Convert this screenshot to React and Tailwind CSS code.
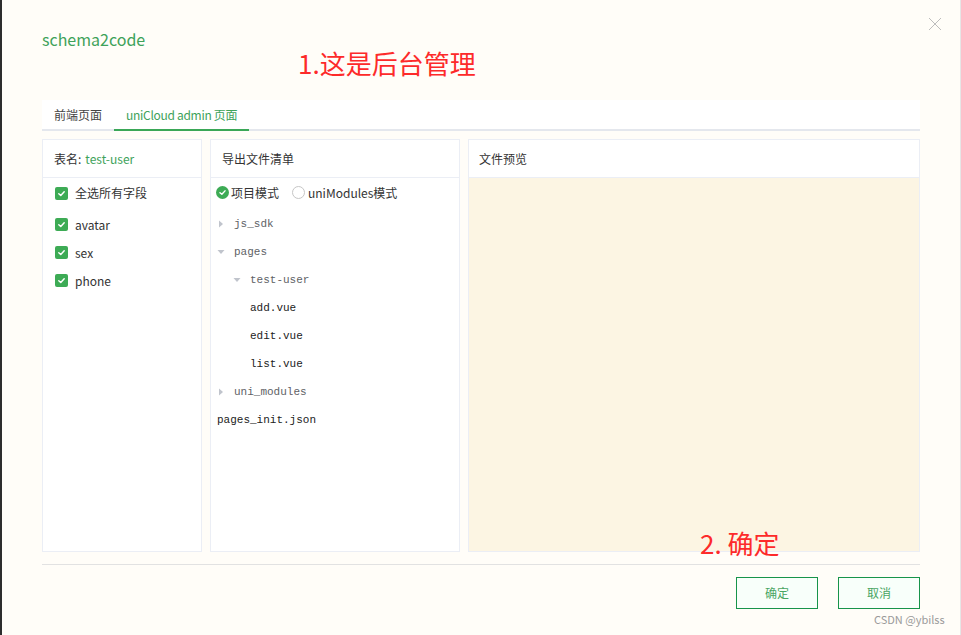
import React from "react";

const sans = "font-['Microsoft_YaHei','Noto_Sans_CJK_SC',sans-serif]";
const mono = "font-['Liberation_Mono','DejaVu_Sans_Mono',monospace]";

function CheckBox() {
  return (
    <span className="inline-flex h-[13px] w-[13px] items-center justify-center rounded-[2px] bg-[#3dab55]">
      <svg viewBox="0 0 10 10" className="h-[9px] w-[9px]">
        <path d="M2 5.2 L4.2 7.2 L8 3" fill="none" stroke="#fff" strokeWidth="1.6" strokeLinecap="round" strokeLinejoin="round" />
      </svg>
    </span>
  );
}

function Caret({ open }) {
  return (
    <svg viewBox="0 0 8 8" className="h-[8px] w-[8px]">
      {open ? <path d="M0.5 2 L7.5 2 L4 6 Z" fill="#c0c4cc" /> : <path d="M2 0.5 L6 4 L2 7.5 Z" fill="#c0c4cc" />}
    </svg>
  );
}

const fields = ["avatar", "sex", "phone"];

const tree = [
  { label: "js_sdk", indent: 0, caret: "closed", muted: true },
  { label: "pages", indent: 0, caret: "open", muted: true },
  { label: "test-user", indent: 1, caret: "open", muted: true },
  { label: "add.vue", indent: 2 },
  { label: "edit.vue", indent: 2 },
  { label: "list.vue", indent: 2 },
  { label: "uni_modules", indent: 0, caret: "closed", muted: true },
  { label: "pages_init.json", indent: -1 },
];

export default function App() {
  return (
    <div className={`relative h-[635px] w-[961px] overflow-hidden border-l-2 border-r border-l-[#2d2d2d] border-r-[#e6e6e6] bg-[#fffdf8] ${sans}`}>
      {/* close */}
      <svg viewBox="0 0 14 14" className="absolute left-[926px] top-[17px] h-[14px] w-[14px]">
        <path d="M1 1 L13 13 M13 1 L1 13" stroke="#bdbdbd" strokeWidth="1" />
      </svg>

      {/* annotations */}
      <div className="absolute left-[296px] top-[45px] text-[26px] leading-[36px] text-[#fd2a2a]">1.这是后台管理</div>
      <div className="absolute left-[698px] top-[526px] text-[26px] leading-[34px] text-[#fd2a2a]">2. 确定</div>

      <div className="ml-[40px] w-[878px]">
        <div className="h-[100px] pt-[27px] text-[16px] leading-[24px] text-[#3ea25a]">schema2code</div>

        {/* tabs */}
        <div className="flex h-[31px] border-b-2 border-[#e4e7ed] bg-white text-[12px]">
          <div className="flex items-center px-[12px] text-[#444]">前端页面</div>
          <div className="-mb-[2px] flex items-center border-b-2 border-[#3aa757] px-[12px] tracking-[-0.3px] text-[#3ea25a]">uniCloud admin 页面</div>
        </div>

        {/* panels */}
        <div className="mt-[8px] flex h-[413px] gap-[8px] text-[12px]">
          <div className="flex w-[160px] flex-col border border-[#ebeef5] bg-white">
            <div className="flex h-[38px] items-center border-b border-[#ebeef5] px-[11px] text-[#333]">
              表名:<span className="ml-[4px] text-[#3ea25a]">test-user</span>
            </div>
            <div className="flex flex-col px-[12px] pt-[5px] text-[#333]">
              <div className="flex h-[20px] items-center gap-[7px]">
                <CheckBox />
                <span>全选所有字段</span>
              </div>
              <div className="mt-[2px] flex flex-col">
                {fields.map((f) => (
                  <div key={f} className="flex h-[28px] items-center gap-[7px] pt-[10px]">
                    <CheckBox />
                    <span className="relative top-[1px]">{f}</span>
                  </div>
                ))}
              </div>
            </div>
          </div>

          <div className="flex w-[250px] flex-col border border-[#ebeef5] bg-white">
            <div className="flex h-[38px] items-center border-b border-[#ebeef5] px-[11px] text-[#333]">导出文件清单</div>
            <div className="flex h-[32px] items-center px-[5px] pb-[3px] text-[#333]">
              <span className="flex h-[13px] w-[13px] items-center justify-center rounded-full bg-[#3dab55]">
                <svg viewBox="0 0 10 10" className="h-[9px] w-[9px]">
                  <path d="M2.2 5.2 L4.3 7 L7.8 3.2" fill="none" stroke="#fff" strokeWidth="1.6" strokeLinecap="round" strokeLinejoin="round" />
                </svg>
              </span>
              <span className="ml-[2px]">项目模式</span>
              <span className="ml-[13px] h-[13px] w-[13px] rounded-full border border-[#c6c6c6] bg-white" />
              <span className="ml-[3px]">uniModules模式</span>
            </div>
            <div className={`flex flex-col ${mono} text-[11px]`}>
              {tree.map((n) => (
                <div
                  key={n.label}
                  className={`flex h-[28px] items-center ${n.muted ? "text-[#606266]" : "text-[#222]"} ${
                    n.indent === -1 ? "pl-[6px]" : n.indent === 0 ? "pl-[6px]" : n.indent === 1 ? "pl-[22px]" : "pl-[39px]"
                  }`}
                >
                  {n.caret && (
                    <span className="mr-[9px] flex w-[8px] items-center">
                      <Caret open={n.caret === "open"} />
                    </span>
                  )}
                  <span>{n.label}</span>
                </div>
              ))}
            </div>
          </div>

          <div className="flex flex-1 flex-col border border-[#ebeef5] bg-white">
            <div className="flex h-[38px] items-center border-b border-[#ebeef5] px-[10px] text-[#333]">文件预览</div>
            <div className="flex-1 bg-[#fcf5e3]" />
          </div>
        </div>

        {/* footer */}
        <div className="mt-[12px] border-t border-[#e2e2e2]" />
        <div className="mt-[12px] flex justify-end gap-[20px] text-[12px]">
          <button className="h-[32px] w-[82px] border border-[#17944a] bg-[#f8fffa] text-[#4aa563]">确定</button>
          <button className="h-[32px] w-[82px] border border-[#17944a] bg-[#f8fffa] text-[#4aa563]">取消</button>
        </div>
      </div>

      <div className="absolute left-[872px] top-[611px] text-[11px] leading-[16px] text-[#9a9a9a]">CSDN @ybilss</div>
    </div>
  );
}
